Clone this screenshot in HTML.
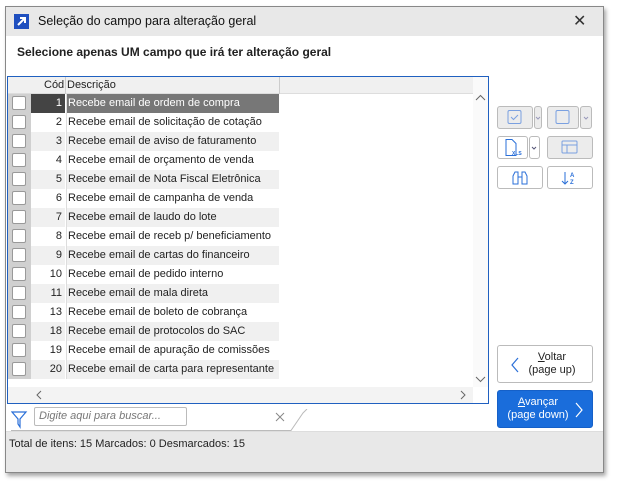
<!DOCTYPE html>
<html><head><meta charset="utf-8"><style>
*{box-sizing:border-box;margin:0;padding:0}
body{width:627px;height:490px;background:#fff;font-family:"Liberation Sans",sans-serif;font-size:11px;color:#222;position:relative;overflow:hidden}
.win{position:absolute;left:5px;top:6px;width:599px;height:467px;background:#fff;border:1px solid #888;box-shadow:2px 3px 4px rgba(0,0,0,.35)}
.title{position:absolute;left:0;top:0;width:597px;height:29px;background:#e8e8e8}
.title .ic{position:absolute;left:8px;top:7px;width:15px;height:15px;background:#1f4fbf}
.title .t{position:absolute;left:32px;top:7px;font-size:12.5px;color:#111}
.title .x{position:absolute;left:567px;top:4px;font-size:16px;color:#333}
.hdr{position:absolute;left:11px;top:38px;font-weight:bold;font-size:12px;color:#222}
.grid{position:absolute;left:1px;top:69px;width:482px;height:328px;border:1px solid #2060c0;background:#fff;overflow:hidden}
.row{position:absolute;left:0;height:19px;width:271px}
.cb{position:absolute;left:0;top:0;width:23px;height:19px;background:#d0d0d0}
.cb i{position:absolute;left:4px;top:2px;width:14px;height:14px;background:#fff;border:1px solid #999;border-radius:2px}
.cod{position:absolute;left:23px;top:0;width:34px;height:19px;text-align:right;padding-right:3px;line-height:19px;font-size:11px}
.ds{position:absolute;left:58px;top:0;width:213px;height:19px;line-height:19px;padding-left:1px;font-size:11px}
.row.g .cod,.row.g .ds{background:#f0f0f0}
.row.w .cod,.row.w .ds{background:#fff}
.row .ds{border-left:1px solid #ddd}
.sel .cod{background:#444!important;color:#fff}
.sel .ds{background:#777!important;color:#fff}
.gh{position:absolute;left:0;top:0;width:480px;height:17px;background:#f0f0f0;border-bottom:1px solid #ddd}
.vs{position:absolute;left:465px;top:0;width:15px;height:310px;background:#fafafa}
.hs{position:absolute;left:0;top:310px;width:465px;height:16px;background:#f3f3f3}
.btn{position:absolute;border:1px solid #bbb;border-radius:3px;background:#fff}
.btn.d{background:#ececec}
.stat{position:absolute;left:0;top:424px;width:597px;height:41px;background:#e8e8e8;border-top:1px solid #ddd}
.nav{position:absolute;left:491px;width:96px;height:38px;border-radius:3px;font-size:11px;text-align:center;line-height:13px;padding-top:5px}
</style></head><body>
<div class="win">
 <div class="title"><div class="ic"><svg width="15" height="15"><path d="M4 11 L11 4 M6 4 H11 V9" stroke="#fff" stroke-width="2" fill="none"/></svg></div><div class="t">Seleção do campo para alteração geral</div><div class="x">✕</div></div>
 <div class="hdr">Selecione apenas UM campo que irá ter alteração geral</div>
 <div class="grid">
  <div class="gh"><span style="position:absolute;left:36px;top:2px">Cód</span><span style="position:absolute;left:59px;top:2px">Descrição</span><span style="position:absolute;left:57px;top:0;width:1px;height:17px;background:#ccc"></span><span style="position:absolute;left:271px;top:0;width:1px;height:17px;background:#ccc"></span><span style="position:absolute;left:469px;top:1px;color:#666">⋮</span></div>
  <div class="vs"><svg width="15" height="310"><path d="M3 23 L7.5 18.5 L12 23" stroke="#666" fill="none"/><path d="M3 300 L7.5 304.5 L12 300" stroke="#666" fill="none"/></svg></div>
  <div class="hs"><svg width="465" height="16"><path d="M33 4 L29 8 L33 12" stroke="#666" fill="none"/><path d="M453 4 L457 8 L453 12" stroke="#666" fill="none"/></svg></div>
  <div class="row sel" style="top:17px"><div class="cb"><i></i></div><div class="cod">1</div><div class="ds">Recebe email de ordem de compra</div></div>
  <div class="row w" style="top:36px"><div class="cb"><i></i></div><div class="cod">2</div><div class="ds">Recebe email de solicitação de cotação</div></div>
  <div class="row g" style="top:55px"><div class="cb"><i></i></div><div class="cod">3</div><div class="ds">Recebe email de aviso de faturamento</div></div>
  <div class="row w" style="top:74px"><div class="cb"><i></i></div><div class="cod">4</div><div class="ds">Recebe email de orçamento de venda</div></div>
  <div class="row g" style="top:93px"><div class="cb"><i></i></div><div class="cod">5</div><div class="ds">Recebe email de Nota Fiscal Eletrônica</div></div>
  <div class="row w" style="top:112px"><div class="cb"><i></i></div><div class="cod">6</div><div class="ds">Recebe email de campanha de venda</div></div>
  <div class="row g" style="top:131px"><div class="cb"><i></i></div><div class="cod">7</div><div class="ds">Recebe email de laudo do lote</div></div>
  <div class="row w" style="top:150px"><div class="cb"><i></i></div><div class="cod">8</div><div class="ds">Recebe email de receb p/ beneficiamento</div></div>
  <div class="row g" style="top:169px"><div class="cb"><i></i></div><div class="cod">9</div><div class="ds">Recebe email de cartas do financeiro</div></div>
  <div class="row w" style="top:188px"><div class="cb"><i></i></div><div class="cod">10</div><div class="ds">Recebe email de pedido interno</div></div>
  <div class="row g" style="top:207px"><div class="cb"><i></i></div><div class="cod">11</div><div class="ds">Recebe email de mala direta</div></div>
  <div class="row w" style="top:226px"><div class="cb"><i></i></div><div class="cod">13</div><div class="ds">Recebe email de boleto de cobrança</div></div>
  <div class="row g" style="top:245px"><div class="cb"><i></i></div><div class="cod">18</div><div class="ds">Recebe email de protocolos do SAC</div></div>
  <div class="row w" style="top:264px"><div class="cb"><i></i></div><div class="cod">19</div><div class="ds">Recebe email de apuração de comissões</div></div>
  <div class="row g" style="top:283px"><div class="cb"><i></i></div><div class="cod">20</div><div class="ds">Recebe email de carta para representante</div></div>
 </div>
 <!-- search -->
 <svg style="position:absolute;left:5px;top:402px" width="300" height="22"><path d="M1 3 H15 L9 10 V18 L7 15 V10 Z" stroke="#2a6fd8" stroke-width="1.2" fill="none"/><path d="M265 4 L273 12 M273 4 L265 12" stroke="#888"/><path d="M0 21.5 H280 L292 4 L296 0" stroke="#bbb" fill="none"/></svg>
 <div style="position:absolute;left:28px;top:400px;width:153px;height:19px;border:1px solid #bbb;border-radius:2px;color:#777;font-style:italic;padding:2px 4px;font-size:11px;white-space:nowrap;overflow:hidden">Digite aqui para buscar...</div>
 <!-- side buttons -->
 <div class="btn d" style="left:491px;top:99px;width:36px;height:23px"><svg width="34" height="21"><rect x="10" y="3.5" width="13" height="13" rx="1.5" stroke="#7aa0e0" fill="none"/><path d="M13 10 L15.5 12.5 L20 8" stroke="#7aa0e0" fill="none"/></svg></div>
 <div class="btn d" style="left:528px;top:99px;width:8px;height:23px"><svg width="6" height="21"><path d="M1 10 L3 12 L5 10" stroke="#99b" fill="none"/></svg></div>
 <div class="btn d" style="left:541px;top:99px;width:32px;height:23px"><svg width="30" height="21"><rect x="8" y="3.5" width="13" height="13" rx="1.5" stroke="#7aa0e0" fill="none"/></svg></div>
 <div class="btn d" style="left:574px;top:99px;width:12px;height:23px"><svg width="10" height="21"><path d="M3 10 L5 12 L7 10" stroke="#99b" fill="none"/></svg></div>
 <div class="btn" style="left:491px;top:129px;width:31px;height:23px"><svg width="29" height="21"><path d="M8 2.5 H14 L18 6.5 V18.5 H8 Z" stroke="#2a6fd8" fill="none"/><text x="14" y="18" font-size="5" font-weight="bold" fill="#2a6fd8" font-family="Liberation Sans">XLS</text></svg></div>
 <div class="btn" style="left:523px;top:129px;width:11px;height:23px"><svg width="9" height="21"><path d="M2 10 L4 12 L6 10" stroke="#557" fill="none"/></svg></div>
 <div class="btn d" style="left:541px;top:129px;width:46px;height:23px"><svg width="44" height="21"><rect x="14" y="4" width="15" height="12" rx="1" stroke="#7aa0e0" fill="none"/><path d="M14 8 H29 M19 8 V16" stroke="#7aa0e0"/></svg></div>
 <div class="btn" style="left:491px;top:159px;width:46px;height:23px"><svg width="44" height="21"><path d="M15 17 V9 L17 5 H20 V17 Z M24 17 V5 H27 L29 9 V17 Z M20 10 H24" stroke="#2a6fd8" fill="none"/></svg></div>
 <div class="btn" style="left:541px;top:159px;width:46px;height:23px"><svg width="44" height="21"><path d="M17 5 V17 M14 14 L17 17 L20 14" stroke="#2a6fd8" fill="none"/><text x="22" y="10" font-size="6" fill="#2a6fd8" font-family="Liberation Sans" font-weight="bold">A</text><text x="22" y="17" font-size="6" fill="#2a6fd8" font-family="Liberation Sans" font-weight="bold">Z</text></svg></div>
 <div class="nav" style="top:338px;border:1px solid #bbb;background:#fff;color:#222;padding-left:14px"><svg style="position:absolute;left:12px;top:11px" width="10" height="16"><path d="M8 1 L2 8 L8 15" stroke="#2a6fd8" stroke-width="1.2" fill="none"/></svg><u>V</u>oltar<br>(page up)</div>
 <div class="nav" style="top:383px;background:#1a6ddb;color:#fff;border:1px solid #1560c8;padding-right:14px"><svg style="position:absolute;left:76px;top:11px" width="10" height="16"><path d="M2 1 L8 8 L2 15" stroke="#fff" stroke-width="1.2" fill="none"/></svg><u>A</u>vançar<br>(page down)</div>
 <div class="stat"><span style="position:absolute;left:3px;top:6px">Total de itens: 15 Marcados: 0 Desmarcados: 15</span></div>
</div>
</body></html>
